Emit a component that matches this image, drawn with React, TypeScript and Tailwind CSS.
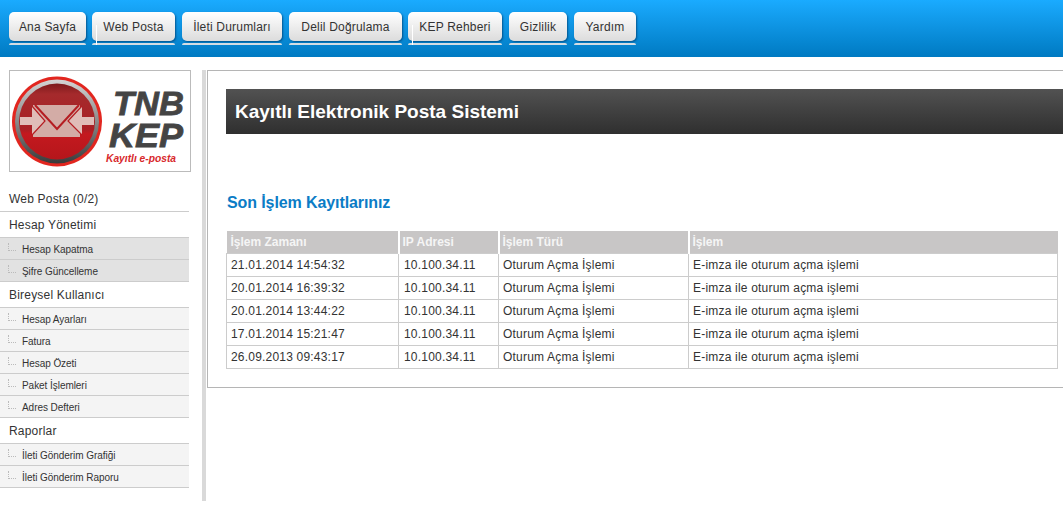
const menu = [
  { label: "Ana Sayfa", w: "w-[77px] mr-[6px]" },
  { label: "Web Posta", w: "w-[83px] mr-[7px]", nick: "left-[4px]" },
  { label: "İleti Durumları", w: "w-[100px] mr-[7px]" },
  { label: "Delil Doğrulama", w: "w-[113px] mr-[6px]" },
  { label: "KEP Rehberi", w: "w-[94px] mr-[7px]", nick: "left-[4px]" },
  { label: "Gizlilik", w: "w-[58px] mr-[7px]" },
  { label: "Yardım", w: "w-[62px]" },
];

const logs = [
  "21.01.2014 14:54:32",
  "20.01.2014 16:39:32",
  "20.01.2014 13:44:22",
  "17.01.2014 15:21:47",
  "26.09.2013 09:43:17",
];

function TopButton({ label, w, nick }: { label: string; w: string; nick?: string }) {
  return (
    <div className={`relative ${w}`}>
      <div className="flex h-[29px] items-center justify-center rounded-[5px] bg-gradient-to-b from-white to-[#dcdcdc] text-[12px] tracking-[0.2px] text-[#333] shadow-[1px_1px_2px_rgba(0,60,110,0.7)]">
        {label}
      </div>
      <div className="mt-[2px] h-[2px] rounded-t-[3px] bg-[#d4dde3]" />
      {nick && <span className={`absolute top-[13px] h-[20px] w-px bg-white ${nick}`} />}
    </div>
  );
}

function Logo() {
  const sans = "'Liberation Sans', sans-serif";
  return (
    <svg viewBox="0 0 180 100" className="h-[100px] w-[180px]">
      <defs>
        <linearGradient id="ring" x1="0" y1="0" x2="0" y2="1">
          <stop offset="0" stopColor="#d4d4d4" />
          <stop offset="0.5" stopColor="#8a8a8a" />
          <stop offset="1" stopColor="#3a3a3a" />
        </linearGradient>
        <linearGradient id="disc" x1="0" y1="0" x2="0" y2="1">
          <stop offset="0" stopColor="#7c1a1c" />
          <stop offset="0.14" stopColor="#a52a2c" />
          <stop offset="0.6" stopColor="#a91f24" />
          <stop offset="0.66" stopColor="#c4191f" />
          <stop offset="1" stopColor="#b5161b" />
        </linearGradient>
      </defs>
      <circle cx="46" cy="50.5" r="45" fill="#e2261f" />
      <circle cx="46" cy="50.5" r="42" fill="url(#ring)" />
      <circle cx="46" cy="50.5" r="38" fill="url(#disc)" />
      <path d="M22 34H69V66H22Z" fill="#d3aca6" />
      <path d="M9 46H21V35L34 50 21 64V54H9Z" fill="#e0bdb8" />
      <path d="M83 46H71V35L57 50 71 64V54H83Z" fill="#e0bdb8" />
      <path d="M24 34L46 58 68 34" fill="none" stroke="#b51d22" strokeWidth="2" />
      <path d="M21 35L34 50 21 64M71 35L57 50 71 64" fill="none" stroke="#b51d22" strokeWidth="1.2" />
      <g fontFamily={sans} fontWeight="700" fontStyle="italic">
        <text x="102" y="44" fontSize="34" fill="#444" stroke="#444" strokeWidth="0.8" textLength="71" lengthAdjust="spacingAndGlyphs">
          TNB
        </text>
        <text x="98" y="76" fontSize="34" fill="#444" stroke="#444" strokeWidth="0.8" textLength="74" lengthAdjust="spacingAndGlyphs">
          KEP
        </text>
        <text x="95" y="91" fontSize="10.5" fill="#d8282c" textLength="70" lengthAdjust="spacingAndGlyphs">
          Kayıtlı e-posta
        </text>
      </g>
    </svg>
  );
}

function NavHead({ label }: { label: string }) {
  return <div className="flex h-[26px] items-center border-b border-[#ccc] pl-[9px] text-[12px] tracking-[0.2px] text-[#333]">{label}</div>;
}

function NavItem({ label, dark }: { label: string; dark?: boolean }) {
  return (
    <div className={`flex h-[22px] items-center border-b border-[#ccc] pt-px pl-[8px] text-[10px] tracking-[-0.05px] text-[#333] ${dark ? "bg-[#e2e2e2]" : "bg-[#f4f4f4]"}`}>
      <span className="mr-[6px] mb-[4px] h-[8px] w-[8px] border-b border-l border-dotted border-[#bbb]" />
      {label}
    </div>
  );
}

export default function App() {
  return (
    <div className="h-[505px] w-[1063px] overflow-hidden bg-white font-['Liberation_Sans',Arial,sans-serif]">
      <header className="flex h-[57px] bg-gradient-to-b from-[#1aabff] to-[#007ac2] pt-[12px] pl-[9px]">
        {menu.map((m) => (
          <TopButton key={m.label} {...m} />
        ))}
      </header>

      <div className="flex pt-[13px]">
        <aside className="w-[189px] shrink-0">
          <div className="ml-[9px] h-[102px] w-[182px] border border-[#bbb] bg-white pl-px">
            <Logo />
          </div>
          <div className="mt-[14px]">
            <NavHead label="Web Posta (0/2)" />
            <NavHead label="Hesap Yönetimi" />
            <NavItem label="Hesap Kapatma" dark />
            <NavItem label="Şifre Güncelleme" dark />
            <NavHead label="Bireysel Kullanıcı" />
            <NavItem label="Hesap Ayarları" />
            <NavItem label="Fatura" />
            <NavItem label="Hesap Özeti" />
            <NavItem label="Paket İşlemleri" />
            <NavItem label="Adres Defteri" />
            <NavHead label="Raporlar" />
            <NavItem label="İleti Gönderim Grafiği" />
            <NavItem label="İleti Gönderim Raporu" />
          </div>
        </aside>

        <div className="ml-[13px] h-[431px] w-[4px] shrink-0 bg-[#d9d9d9]" />

        <main className="ml-px h-[318px] flex-1 border-t border-b border-l border-[#b5b5b5] pt-[18px] pl-[18px]">
          <h1 className="flex h-[45px] items-center bg-gradient-to-b from-[#525252] to-[#2f2f2f] pt-px pl-[9px] text-[19px] font-bold text-white">
            Kayıtlı Elektronik Posta Sistemi
          </h1>
          <h2 className="mt-[59px] ml-[1px] text-[16px] leading-[20px] font-bold tracking-[-0.1px] text-[#0b7cc6]">Son İşlem Kayıtlarınız</h2>
          <table className="mt-[18px] w-[832px] table-fixed border-collapse text-[12px] text-[#333]">
            <colgroup>
              <col className="w-[172px]" />
              <col className="w-[100px]" />
              <col className="w-[190px]" />
              <col />
            </colgroup>
            <thead>
              <tr className="h-[22px] bg-[#c8c6c6] text-left font-bold text-[#f5f5f5]">
                <th className="border-r-2 border-white pl-[4px]">İşlem Zamanı</th>
                <th className="border-r-2 border-white pl-[3px]">IP Adresi</th>
                <th className="border-r-2 border-white pl-[3px]">İşlem Türü</th>
                <th className="pl-[3px]">İşlem</th>
              </tr>
            </thead>
            <tbody className="tracking-[0.2px]">
              {logs.map((t) => (
                <tr key={t} className="h-[23px]">
                  <td className="border border-[#ccc] pl-[4px]">{t}</td>
                  <td className="border border-[#ccc] pl-[5px]">10.100.34.11</td>
                  <td className="border border-[#ccc] pl-[4px]">Oturum Açma İşlemi</td>
                  <td className="border border-[#ccc] pl-[4px]">E-imza ile oturum açma işlemi</td>
                </tr>
              ))}
            </tbody>
          </table>
        </main>
      </div>
    </div>
  );
}
